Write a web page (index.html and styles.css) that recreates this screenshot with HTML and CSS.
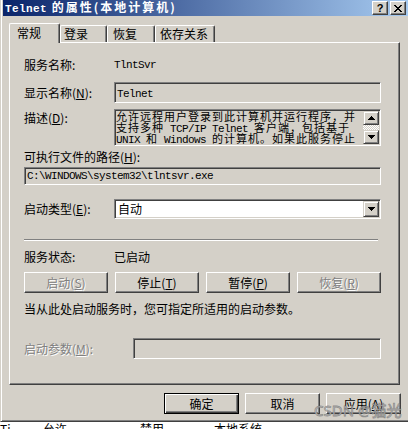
FILE: index.html
```html
<!DOCTYPE html>
<html lang="zh-CN">
<head>
<meta charset="utf-8">
<title>Telnet 的属性</title>
<link rel="stylesheet" href="styles.css">
</head>
<body>
<div class="window">
  <div class="titlebar">
    <span class="title"><span class="tmono">Telnet</span> 的属性(本地计算机)</span>
    <div class="tbtns">
      <span class="tbtn help">?</span>
      <span class="tbtn"><svg width="8" height="7" viewBox="0 0 8 7"><path d="M0 0h2v1H0zM6 0h2v1H6zM1 1h2v1H1zM5 1h2v1H5zM2 2h4v1H2zM3 3h2v1H3zM2 4h4v1H2zM1 5h2v1H1zM5 5h2v1H5zM0 6h2v1H0zM6 6h2v1H6z"/></svg></span>
    </div>
  </div>
  <div class="tabs">
    <div class="tab active">常规</div>
    <div class="tab t-login">登录</div>
    <div class="tab t-recover">恢复</div>
    <div class="tab t-deps">依存关系</div>
  </div>
  <div class="panel">
    <div class="row r1"><span class="lbl">服务名称:</span><span class="mono">TlntSvr</span></div>
    <div class="row r2"><span class="lbl">显示名称(<u>N</u>):</span><div class="field ro name"><span class="mono">Telnet</span></div></div>
    <div class="row r3"><span class="lbl lbl-top">描述(<u>D</u>):</span>
      <div class="field ro desc">
        <div class="desc-text">
          <div class="dline">允许远程用户登录到此计算机并运行程序，并</div>
          <div class="dline">支持多种<span class="mono"> TCP/IP Telnet </span>客户端，包括基于</div>
          <div class="dline"><span class="mono">UNIX </span>和<span class="mono"> Windows </span>的计算机。如果此服务停止</div>
        </div>
        <div class="vscroll">
          <div class="sbtn"><svg width="7" height="4" viewBox="0 0 7 4"><path d="M3 0h1v1h1v1h1v1h1v1H0V3h1V2h1V1h1z"/></svg></div>
          <div class="strack"></div>
          <div class="sbtn"><svg width="7" height="4" viewBox="0 0 7 4"><path d="M0 0h7v1H6v1H5v1H4v1H3V3H2V2H1V1H0z"/></svg></div>
        </div>
      </div>
    </div>
    <div class="row r4">可执行文件的路径(<u>H</u>):</div>
    <div class="row r5"><div class="field ro path"><span class="mono">C:\WINDOWS\system32\tlntsvr.exe</span></div></div>
    <div class="row r6"><span class="lbl">启动类型(<u>E</u>):</span>
      <div class="field combo"><span class="combo-text">自动</span><span class="sbtn combo-btn"><svg width="7" height="4" viewBox="0 0 7 4"><path d="M0 0h7v1H6v1H5v1H4v1H3V3H2V2H1V1H0z"/></svg></span></div>
    </div>
    <div class="sep"></div>
    <div class="row r7"><span class="lbl">服务状态:</span><span>已启动</span></div>
    <div class="r8 btnrow">
      <button class="btn disabled">启动(<u>S</u>)</button>
      <button class="btn">停止(<u>T</u>)</button>
      <button class="btn">暂停(<u>P</u>)</button>
      <button class="btn disabled">恢复(<u>R</u>)</button>
    </div>
    <div class="row r9">当从此处启动服务时，您可指定所适用的启动参数。</div>
    <div class="row r10"><span class="lbl lbl-wide disabled">启动参数(<u>M</u>):</span><div class="field ro"></div></div>
  </div>
  <div class="footer">
    <button class="btn default">确定</button>
    <button class="btn">取消</button>
    <button class="btn">应用(<u>A</u>)</button>
  </div>
  <div class="watermark">CSDN @猫光</div>
</div>
<div class="behind"><span>Ti</span><span>允许</span><span>禁用</span><span>本地系统</span></div>
</body>
</html>
```
FILE: styles.css
```css
* { box-sizing: border-box; }
html, body { margin: 0; padding: 0; overflow: hidden; background: #fff; }
body {
  width: 408px; height: 429px;
  font-family: "Noto Sans CJK SC", "Noto Sans", sans-serif;
  font-size: 12px; line-height: 14px; color: #000;
}
u { text-decoration: underline; text-underline-offset: 1px; }

.window {
  position: relative;
  width: 411px;
  background: #d4d0c8;
  border-left: 1px solid #d4d0c8;
  border-bottom: 1px solid #404040;
  box-shadow: inset 1px 0 #fff, inset 0 -1px #808080;
  padding: 0 3px 0 2px;
}

.titlebar {
  height: 16px;
  display: flex; justify-content: space-between; align-items: center;
  padding: 0 2px;
  background: linear-gradient(to right, #0a246a, #a6caf0);
  color: #fff;
}
.title { font-weight: bold; letter-spacing: 2px; white-space: nowrap; line-height: 16px; }
.tmono { font-family: "Liberation Mono", monospace; font-size: 11px; letter-spacing: 0.4px; }
.tbtns { display: flex; gap: 2px; align-self: flex-start; margin-top: 1px; }
.tbtn {
  width: 16px; height: 14px;
  display: flex; align-items: center; justify-content: center;
  background: #d4d0c8;
  border: 1px solid; border-color: #fff #404040 #404040 #fff;
  box-shadow: inset -1px -1px #808080;
  color: #000;
}
.tbtn svg { fill: #000; display: block; }
.tbtn.help { font-family: "Liberation Sans", sans-serif; font-weight: bold; font-size: 11px; line-height: 12px; }

.tabs { display: flex; align-items: flex-end; height: 19px; margin: 7px 0 0 6px; }
.tab {
  height: 17px;
  display: flex; align-items: center;
  padding-left: 5px;
  background: #d4d0c8;
  border-top: 1px solid #fff; border-left: 1px solid #fff; border-right: 1px solid #404040;
  box-shadow: inset -1px 0 #808080;
  border-radius: 2px 2px 0 0;
  white-space: nowrap;
}
.tab.active {
  position: relative; z-index: 1;
  width: 51px; height: 20px; margin-bottom: -1px;
  padding: 0 0 2px 7px;
}
.t-login { width: 47px; padding-left: 3px; }
.t-recover { width: 48px; padding-left: 5px; }
.t-deps { width: 60px; padding-left: 4px; }

.panel {
  width: 391px; height: 343px;
  margin-left: 6px;
  padding: 14px 18px 0 14px;
  border: 1px solid; border-color: #fff #404040 #404040 #fff;
  box-shadow: inset -1px -1px #808080;
}

.row { display: flex; align-items: center; white-space: nowrap; }
.lbl { width: 90px; flex: none; }
.lbl-wide { width: 109px; }
.lbl-top { align-self: flex-start; padding-top: 2px; }
.disabled { color: #808080; text-shadow: 1px 1px #fff; }

.mono { font-family: "Liberation Mono", monospace; font-size: 11px; letter-spacing: -0.6px; }

.r1 { height: 16px; }
.r2 { height: 21px; margin-top: 9px; }
.r3 { height: 37px; margin-top: 6px; align-items: stretch; }
.r4 { height: 14px; margin-top: 4px; }
.r5 { height: 18px; margin-top: 3px; }
.r6 { height: 20px; margin-top: 14px; }
.r7 { height: 14px; margin-top: 9px; }
.r8 { height: 21px; margin-top: 8px; }
.r9 { height: 14px; margin-top: 9px; }
.r10 { height: 21px; margin-top: 22px; }

.field {
  flex: 1; align-self: stretch;
  border: 1px solid; border-color: #808080 #fff #fff #808080;
  box-shadow: inset 1px 1px #404040, inset -1px -1px #d4d0c8;
  background: #d4d0c8;
  overflow: hidden;
}
.name { padding: 2px 1px 0 2px; line-height: 14px; }
.path { display: flex; align-items: center; padding: 0 2px; }
.desc { display: flex; padding: 0 1px; }
.desc-text { flex: 1; overflow: hidden; white-space: nowrap; font-size: 11px; letter-spacing: 1px; }
.dline { height: 11px; line-height: 12px; }
.dline .mono { line-height: 12px; letter-spacing: -0.6px; }
.vscroll { width: 16px; flex: none; display: flex; flex-direction: column; margin: 1px 0; }
.sbtn {
  display: flex; align-items: center; justify-content: center;
  background: #d4d0c8;
  border: 1px solid; border-color: #d4d0c8 #404040 #404040 #d4d0c8;
  box-shadow: inset 1px 1px #fff, inset -1px -1px #808080;
}
.sbtn svg { display: block; fill: #000; }
.vscroll .sbtn { height: 14px; }
.strack {
  flex: 1;
  background: repeating-conic-gradient(#fff 0 25%, #d4d0c8 0 50%) 0 0 / 2px 2px;
}

.combo { display: flex; justify-content: space-between; align-items: stretch; background: #fff; padding: 1px; }
.combo-text { padding-left: 2px; line-height: 16px; }
.combo-btn { width: 16px; flex: none; }

.sep { width: 354px; height: 2px; margin-top: 20px; border-top: 1px solid #808080; border-bottom: 1px solid #fff; }

.btnrow { display: grid; grid-template-columns: repeat(4, 1fr); gap: 7px; }
.btn {
  font: inherit; line-height: 14px; color: #000;
  height: 21px; padding: 0;
  background: #d4d0c8;
  border: 1px solid; border-color: #fff #404040 #404040 #fff;
  box-shadow: inset -1px -1px #808080;
  white-space: nowrap;
}
.btn.disabled { color: #808080; text-shadow: 1px 1px #fff; }
.btn.default {
  border-color: #000;
  box-shadow: inset 1px 1px #fff, inset -1px -1px #404040, inset -2px -2px #808080;
}

.footer { display: flex; justify-content: flex-end; gap: 6px; padding: 8px 7px 7px 0; }
.footer .btn { width: 75px; }

.watermark {
  position: absolute; left: 313px; top: 402px;
  font-family: "Noto Sans", "Noto Sans CJK SC", sans-serif;
  font-size: 15px; line-height: 17px; white-space: nowrap;
  color: rgba(215, 215, 215, 0.9);
  -webkit-text-stroke: 0.8px rgba(100, 100, 100, 0.65);
}

.behind {
  display: grid; grid-template-columns: 43px 97px 74px auto;
  height: 14px; line-height: 14px; white-space: nowrap; background: #fff;
}
```
